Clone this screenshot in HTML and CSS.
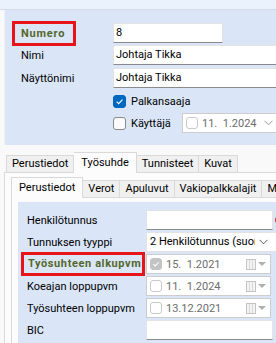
FILE: index.html
```html
<!DOCTYPE html>
<html lang="fi">
<head>
  <meta charset="UTF-8" />
  <title>Työntekijä</title>
  <link rel="stylesheet" href="styles.css">
</head>
<body>
  <div class="topband"></div>

  <!-- Header fields -->
  <section class="head">
    <div class="row r-num">
      <div class="lbl"><span class="hl">Numero</span></div>
      <div class="box box-num">8</div>
    </div>
    <div class="row">
      <div class="lbl">Nimi</div>
      <div class="box box-wide">Johtaja Tikka</div>
    </div>
    <div class="row gap1">
      <div class="lbl">Näyttönimi</div>
      <div class="box box-wide">Johtaja Tikka</div>
    </div>
    <div class="row gap1">
      <div class="lbl"></div>
      <span class="cb on"><svg width="9" height="9" viewBox="0 0 10 10"><path d="M1.8 5.2 L4.1 7.4 L8.3 2.8" stroke="#fff" stroke-width="1.3" fill="none"/></svg></span>
      <span class="cbtext">Palkansaaja</span>
    </div>
    <div class="row">
      <div class="lbl"></div>
      <span class="cb"></span>
      <span class="cbtext user">Käyttäjä</span>
      <div class="date date-head">
        <span class="cb small"></span>
        <span class="dtext">11.&nbsp; 1.2024</span>
        <svg class="chev" width="9" height="6" viewBox="0 0 9 6"><path d="M0.5 0.8 L4.5 4.8 L8.5 0.8" stroke="#9a9a9a" fill="none"/></svg>
      </div>
    </div>
  </section>

  <!-- Outer tabs -->
  <nav class="tabs outer-tabs">
    <span class="tab">Perustiedot</span>
    <span class="tab active">Työsuhde</span>
    <span class="tab">Tunnisteet</span>
    <span class="tab">Kuvat</span>
  </nav>
  <div class="page outer-page">
    <nav class="tabs inner-tabs">
      <span class="tab active">Perustiedot</span>
      <span class="tab">Verot</span>
      <span class="tab">Apuluvut</span>
      <span class="tab">Vakiopalkkalajit</span>
      <span class="tab">Muut</span>
    </nav>
    <div class="page inner-page">
      <div class="fields">
        <div class="frow">
          <div class="flbl">Henkilötunnus</div>
          <div class="box fbox"></div>
          <span class="err"></span>
        </div>
        <div class="frow">
          <div class="flbl">Tunnuksen tyyppi</div>
          <div class="box select">
            <span class="seltext">2 Henkilötunnus (suomalainen)</span>
            <svg width="9" height="6" viewBox="0 0 9 6"><path d="M0.5 0.8 L4.5 4.8 L8.5 0.8" stroke="#5a5a5a" fill="none"/></svg>
          </div>
        </div>
        <div class="frow">
          <div class="flbl"><span class="hl hl2">Työsuhteen alkupvm</span></div>
          <div class="date fdate">
            <span class="cb small dis"><svg width="8" height="8" viewBox="0 0 10 10"><path d="M1.8 5.2 L4.1 7.4 L8.3 2.8" stroke="#fff" stroke-width="1.3" fill="none"/></svg></span>
            <span class="dtext">15.&nbsp; 1.2021</span>
            <span class="cal"></span>
            <span class="tri"></span>
          </div>
        </div>
        <div class="frow">
          <div class="flbl">Koeajan loppupvm</div>
          <div class="date fdate">
            <span class="cb small"></span>
            <span class="dtext">11.&nbsp; 1.2024</span>
            <span class="cal"></span>
            <span class="tri"></span>
          </div>
        </div>
        <div class="frow">
          <div class="flbl">Työsuhteen loppupvm</div>
          <div class="date fdate">
            <span class="cb small"></span>
            <span class="dtext">13.12.2021</span>
            <span class="cal"></span>
            <span class="tri"></span>
          </div>
        </div>
        <div class="frow">
          <div class="flbl">BIC</div>
          <div class="box fbox"></div>
        </div>
      </div>
    </div>
  </div>
</body>
</html>
```

FILE: styles.css
```css
body {
  margin: 0;
  width: 276px;
  height: 343px;
  overflow: hidden;
  font-family: Roboto, sans-serif;
  font-size: 11px;
  color: #000;
  background: #f9f9f9;
}

.topband {
  height: 9px;
  background: #eaf2fd;
  border-bottom: 1px solid #d3dbe6;
}

/* header panel */
.head {
  margin-left: 4px;
  height: 135px;
  box-sizing: border-box;
  padding-top: 12px;
  background: #dae6f8;
  border-left: 1px solid #edf2fa;
  overflow: hidden;
}

.row {
  display: flex;
  align-items: center;
  height: 22px;
}

.gap1 {
  margin-top: 1px;
}

.lbl {
  flex: none;
  width: 108px;
  box-sizing: border-box;
  padding-left: 16px;
}

.hl {
  display: inline-block;
  margin-left: -9px;
  padding: 0 8px 0 6px;
  height: 19px;
  line-height: 19px;
  border: 3px solid #e8141c;
  font-weight: bold;
  letter-spacing: 0.8px;
  color: #55662a;
}

.box {
  height: 20px;
  box-sizing: border-box;
  background: #fff;
  border: 1px solid #e3e3e3;
  border-bottom-color: #8a8a8a;
  padding: 0 2px;
  line-height: 18px;
  white-space: nowrap;
  overflow: hidden;
}

.box-num {
  width: 110px;
}

.box-wide {
  flex: 1;
  margin-right: -4px;
}

.cb {
  flex: none;
  width: 13px;
  height: 13px;
  box-sizing: border-box;
  border: 1px solid #8a8a8a;
  border-radius: 3px;
  background: #fbfbfb;
  display: flex;
  align-items: center;
  justify-content: center;
}

.cb.on {
  background: #0067c0;
  border-color: #0067c0;
}

.cb.small {
  width: 12px;
  height: 12px;
  border-color: #c9c9c9;
  background: #fff;
}

.cb.dis {
  background: #c4c4c4;
  border-color: #c4c4c4;
}

.cbtext {
  margin-left: 5px;
}

.cbtext.user {
  width: 51px;
}

.date {
  flex: none;
  height: 20px;
  box-sizing: border-box;
  display: flex;
  align-items: center;
  background: #fff;
  border: 1px solid #cdcdcd;
  padding-left: 3px;
  color: #6d6d6d;
}

.date-head {
  flex: 1;
  margin-right: -4px;
}

.dtext {
  margin-left: 4px;
  white-space: nowrap;
}

.chev {
  margin-left: auto;
  margin-right: 6px;
}

/* tabs */
.tabs {
  display: flex;
  align-items: flex-end;
  height: 20px;
  white-space: nowrap;
}

.tab {
  flex: none;
  height: 17px;
  box-sizing: border-box;
  line-height: 15px;
  padding: 0 5px;
  background: #f0f0f0;
  border: 1px solid #d9d9d9;
  border-bottom: none;
}

.tab + .tab {
  border-left: none;
}

.tab.active {
  height: 21px;
  line-height: 19px;
  padding: 0 7px;
  margin-bottom: -1px;
  background: #fcfcfc;
}

.outer-tabs {
  margin-top: 7px;
  padding-left: 6px;
  position: relative;
}

.page {
  box-sizing: border-box;
  background: #fcfcfc;
  border-top: 1px solid #d9d9d9;
  border-left: 1px solid #d9d9d9;
  overflow: hidden;
}

.outer-page {
  margin-left: 4px;
  padding: 4px 0 0 6px;
  height: 171px;
}

.inner-page {
  padding: 4px 0 0 6px;
  height: 146px;
}

.fields {
  background: #dae6f8;
  padding: 7px 0 0 9px;
  height: 141px;
  box-sizing: border-box;
}

.frow {
  display: flex;
  align-items: center;
  height: 22px;
}

.flbl {
  flex: none;
  width: 119px;
  white-space: nowrap;
}

.hl2 {
  margin-left: -6px;
  padding: 0 1px 0 4px;
  height: 18px;
  line-height: 18px;
  letter-spacing: 0.6px;
}

.fbox {
  flex: none;
  width: 127px;
}

.err {
  flex: none;
  width: 10px;
  height: 10px;
  margin-left: 2px;
  border-radius: 50%;
  background: #d9311f;
}

.select {
  flex: 1;
  display: flex;
  align-items: center;
  border-bottom-color: #e3e3e3;
  padding-left: 3px;
  margin-right: -3px;
}

.seltext {
  flex: 1;
  overflow: hidden;
}

.select svg {
  flex: none;
  margin: 0 8px 0 4px;
}

.fdate {
  width: 125px;
}

.cal {
  margin-left: auto;
  width: 10px;
  height: 11px;
  box-sizing: border-box;
  border: 1px solid #c4c4c4;
  background:
    repeating-linear-gradient(90deg, transparent 0 2px, #d8d8d8 2px 3px),
    #f4f4f4;
}

.tri {
  width: 0;
  height: 0;
  margin: 0 4px 0 2px;
  border-left: 4px solid transparent;
  border-right: 4px solid transparent;
  border-top: 4px solid #b0b0b0;
}
```
